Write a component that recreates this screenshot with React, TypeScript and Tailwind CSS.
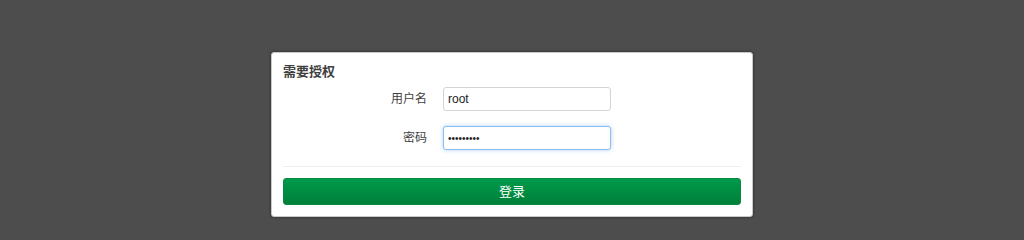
export default function App() {
  return (
    <div
      className="flex h-[240px] w-full justify-center bg-[#4d4d4d] pt-[52px]"
      style={{ fontFamily: '"Liberation Sans", "Noto Sans CJK SC", sans-serif' }}
    >
      <div className="h-[165px] w-[482px] rounded-[3px] border border-[#c8c8c8] bg-white px-[11px] pt-[9px] shadow-[0_0_3px_rgba(0,0,0,0.5)]">
        <h2 className="text-[13px] font-bold leading-[20px] text-[#404040]">需要授权</h2>

        <div className="mt-[5px] flex flex-col gap-[15px]">
          <div className="flex items-center gap-[16px]">
            <label className="w-[144px] text-right text-[12px] text-[#404040]">用户名</label>
            <input
              readOnly
              value="root"
              className="h-[24px] w-[168px] rounded-[3px] border border-[#d4d4d4] bg-white px-[4px] text-[12px] text-[#222] outline-none"
            />
          </div>
          <div className="flex items-center gap-[16px]">
            <label className="w-[144px] text-right text-[12px] text-[#404040]">密码</label>
            <input
              readOnly
              type="password"
              value="password1"
              className="h-[24px] w-[168px] rounded-[3px] border border-[#8cbcf0] bg-white px-[4px] text-[10px] text-[#222] shadow-[0_0_4px_rgba(80,150,230,0.45)] outline-none"
            />
          </div>
        </div>

        <div className="mt-[16px] h-px bg-[#eeeeee]" />

        <button className="mt-[11px] h-[27px] w-full rounded-[3px] border border-[#0a8a40] bg-gradient-to-b from-[#009a4b] to-[#00803a] text-[13px] text-white">
          登录
        </button>
      </div>
    </div>
  );
}
